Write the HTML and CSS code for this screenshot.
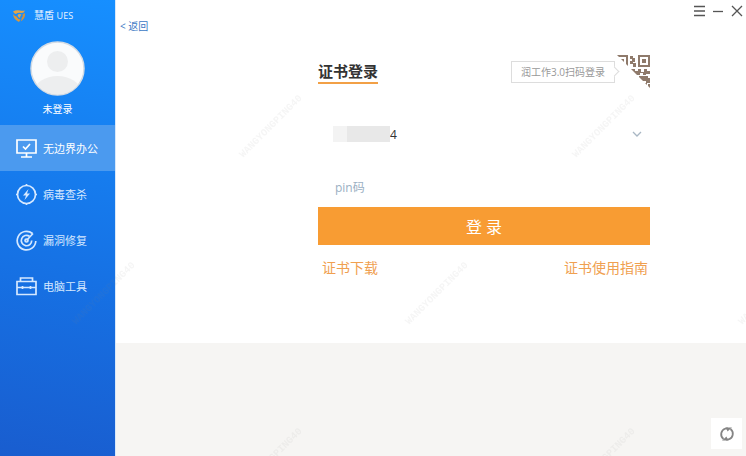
FILE: index.html
```html
<!DOCTYPE html>
<html lang="zh-CN">
<head>
    <meta charset="UTF-8">
    <meta name="viewport" content="width=device-width, initial-scale=1.0">
    <title>慧盾 UES</title>
    <link rel="stylesheet" href="styles.css">
</head>
<body>
    <div class="app">
        <aside class="sidebar">
            <div class="brand">
                <svg class="brand-logo" viewBox="0 0 14 14">
                    <path d="M1 2.500Q4 0.500 8 1.500Q11 2 13 1.500Q12 4 9.500 4Q6 3 4 5Q2 4.500 1 2.500Z" fill="#e3a548"/>
                    <path d="M1 5Q2.500 7 4.500 7.500Q6 10.500 8.500 10.500L7 13Q1.500 10.500 1 5Z" fill="#d9983c"/>
                    <path d="M13 4Q13.500 10 8.500 12.500Q10 10 9.500 9Q11.500 7 10.500 5.500Z" fill="#cf9240"/>
                    <path d="M5.500 6Q7 4.500 9.500 5.500Q8 7 8 9Q6 8.500 5.500 6Z" fill="#e3a548"/>
                </svg>
                <span class="brand-name">慧盾 <small>UES</small></span>
            </div>

            <div class="user">
                <svg class="avatar" viewBox="0 0 55 55">
                    <defs>
                        <clipPath id="avatarClip"><circle cx="27.500" cy="27.500" r="26"/></clipPath>
                    </defs>
                    <circle cx="27.500" cy="27.500" r="26.500" fill="#fafbfc" stroke="#d3dbe4" stroke-width="1.500"/>
                    <circle cx="27.500" cy="20.500" r="10.500" fill="#edeeef"/>
                    <ellipse cx="27.500" cy="50" rx="23" ry="15" fill="#edeeef" clip-path="url(#avatarClip)"/>
                </svg>
                <span class="user-name">未登录</span>
            </div>

            <nav class="menu">
                <a href="#" class="menu-item active">
                    <svg class="menu-icon" viewBox="0 0 21 21">
                        <path d="M1 2H20V15H1Z M10.500 15V18.500 M5 19H16"/>
                        <path d="M7 8.500L9.500 11L14 6"/>
                    </svg>
                    <span>无边界办公</span>
                </a>
                <a href="#" class="menu-item">
                    <svg class="menu-icon" viewBox="0 0 21 21">
                        <circle cx="10.500" cy="10.500" r="9"/>
                        <path d="M10.500 0V2 M10.500 19V21 M0 10.500H2 M19 10.500H21"/>
                        <path class="solid" d="M12.500 5L7 11.500H10L8.500 16L14 9.500H11Z"/>
                    </svg>
                    <span>病毒查杀</span>
                </a>
                <a href="#" class="menu-item">
                    <svg class="menu-icon" viewBox="0 0 21 21">
                        <path d="M16.500 3.500A9.300 9.300 0 1 0 19.800 11"/>
                        <path d="M13.500 6.300A5.200 5.200 0 1 0 15.700 10.500"/>
                        <path d="M10.500 10.500L17 3.500"/>
                        <circle cx="10.500" cy="10.500" r="1.500"/>
                    </svg>
                    <span>漏洞修复</span>
                </a>
                <a href="#" class="menu-item">
                    <svg class="menu-icon" viewBox="0 0 21 21">
                        <path d="M1 5.500H20V18.500H1Z M1 11.500H20"/>
                        <path d="M4.500 5.500V2H16.500V5.500 M6.500 10V13 M14.500 10V13"/>
                    </svg>
                    <span>电脑工具</span>
                </a>
            </nav>
        </aside>

        <main class="main">
            <section class="panel">
                <header class="titlebar">
                    <a href="#" class="back">&lt; 返回</a>
                    <div class="window-buttons">
                        <button type="button" aria-label="菜单">
                            <svg viewBox="0 0 12 12"><path d="M1 1.500H12 M1 6H12 M1 10.500H12"/></svg>
                        </button>
                        <button type="button" aria-label="最小化">
                            <svg viewBox="0 0 12 12"><path d="M1 6.500H11"/></svg>
                        </button>
                        <button type="button" aria-label="关闭">
                            <svg viewBox="0 0 12 12"><path d="M1 1L11 11 M11 1L1 11"/></svg>
                        </button>
                    </div>
                </header>

                <form class="login">
                    <div class="login-head">
                        <h1>证书登录</h1>
                        <div class="scan">
                            <a href="#" class="scan-tip">润工作3.0扫码登录</a>
                            <svg class="qr" viewBox="0 0 33 33">
                                <defs>
                                    <clipPath id="qrClip"><path d="M0 0H33V33Z"/></clipPath>
                                </defs>
                                <g clip-path="url(#qrClip)" fill="#8f7a6b">
                                    <path fill-rule="evenodd" d="M0 0H11V12H0Z M2 2H9V10H2Z"/>
                                    <path d="M4 4H7V8H4Z"/>
                                    <path fill-rule="evenodd" d="M21 0H33V12H21Z M23 2H31V10H23Z"/>
                                    <path d="M25 4H29V8H25Z"/>
                                    <path d="M13 1H16V3H18V7H16V9H13V6H15V4H13Z M16 8H19V12H16Z"/>
                                    <path d="M14 14H18V16H21V14H24V17H27V14H30V16H33V19H29V20H26V18H23V20H18V18H14Z"/>
                                    <path d="M22 21H31V23H33V28H29V26H26V28H22Z M27 28H30V33H27Z M31 29H33V33H31Z"/>
                                </g>
                            </svg>
                        </div>
                    </div>

                    <div class="field account">
                        <span class="mask"></span>
                        <select aria-label="证书账号">
                            <option>4</option>
                        </select>
                        <svg class="arrow" viewBox="0 0 10 6"><path d="M1 1L5 5L9 1"/></svg>
                    </div>
                    <div class="field">
                        <input type="password" placeholder="pin码" aria-label="pin码">
                    </div>

                    <button type="button" class="submit">登 录</button>

                    <div class="links">
                        <a href="#">证书下载</a>
                        <a href="#">证书使用指南</a>
                    </div>
                </form>
            </section>

            <footer class="bottom">
                <button type="button" class="refresh" aria-label="刷新">
                    <svg viewBox="0 0 16 16">
                        <path d="M4.500 13A6 6 0 0 1 6.500 2.500H9 M11.500 3A6 6 0 0 1 9.500 13.500H7"/>
                        <path class="solid" d="M7 1.500H13L8.500 5.500Z M9 14.500H3L7.500 10.500Z"/>
                    </svg>
                </button>
            </footer>
        </main>

        <!-- watermark over the whole window -->
        <svg class="watermark" aria-hidden="true">
            <defs>
                <pattern id="mark" width="333" height="333" patternUnits="userSpaceOnUse">
                    <text transform="translate(76 325) rotate(-45)">WANGYONGPING40</text>
                    <text transform="translate(243 158) rotate(-45)">WANGYONGPING40</text>
                </pattern>
            </defs>
            <rect width="100%" height="100%" fill="url(#mark)"/>
        </svg>
    </div>
</body>
</html>
```
FILE: styles.css
```css
* {
    box-sizing: border-box;
}

body {
    margin: 0;
    font-family: "Open Sans", "Noto Sans CJK SC", sans-serif;
    font-size: 10px;
    line-height: 16px;
    color: #333;
}

a {
    text-decoration: none;
}

button {
    border: none;
    padding: 0;
    background: none;
    font-family: inherit;
    cursor: pointer;
}

.app {
    position: relative;
    display: flex;
    min-height: 100vh;
    overflow: hidden;
}

/* sidebar */
.sidebar {
    flex: none;
    width: 115px;
    background: linear-gradient(190deg, #168fff, #1671e4 60%, #195dcf);
    color: #eaf4ff;
}

.brand {
    display: flex;
    align-items: center;
    gap: 8px;
    padding: 7px 12px 0;
}

.brand-logo {
    width: 14px;
    height: 14px;
}

.brand small {
    font-size: 9px;
}

.user {
    display: flex;
    flex-direction: column;
    align-items: center;
    gap: 5px;
    padding: 17px 0 8px;
}

.avatar {
    width: 55px;
    height: 55px;
}

.user-name {
    color: #fff;
}

.menu-item {
    display: flex;
    align-items: center;
    gap: 6px;
    height: 46px;
    padding-left: 16px;
    font-size: 11px;
    color: #d5e8ff;
}

.menu-item span {
    padding-top: 2px;
}

.menu-item.active {
    background: #4b9aef;
    color: #fff;
}

.menu-icon {
    width: 21px;
    height: 21px;
    fill: none;
    stroke: currentColor;
    stroke-width: 1.7;
}

.menu-icon .solid {
    fill: currentColor;
    stroke: none;
}

/* right side */
.main {
    flex: 1;
    display: flex;
    flex-direction: column;
    border-left: 1px solid #d8e8fa;
}

.panel {
    padding-bottom: 65px;
    background: #fff;
}

.titlebar {
    display: flex;
    justify-content: space-between;
    align-items: flex-start;
    padding: 4px 3px 0 4px;
}

.back {
    padding-top: 14px;
    color: #3b78c4;
}

.window-buttons {
    display: flex;
    gap: 7px;
}

.window-buttons button {
    width: 12px;
    height: 14px;
}

.window-buttons svg {
    display: block;
    width: 12px;
    height: 12px;
    fill: none;
    stroke: #555;
    stroke-width: 1.3;
}

.login {
    margin: 21px 96px 0 202px;
}

.login-head {
    display: flex;
    justify-content: space-between;
    align-items: center;
    height: 33px;
}

h1 {
    margin: 0;
    padding: 2px 0 1px;
    border-bottom: 2px solid #f2a046;
    font-size: 15px;
    line-height: 20px;
}

.scan {
    display: flex;
    align-items: center;
    gap: 2px;
}

.scan-tip {
    position: relative;
    padding: 2px 9px;
    border: 1px solid #ddd;
    color: #999;
}

.scan-tip::after {
    content: "";
    position: absolute;
    top: 6px;
    right: -4px;
    width: 6px;
    height: 6px;
    border: solid #ddd;
    border-width: 1px 1px 0 0;
    background: #fff;
    transform: rotate(45deg);
}

.qr {
    width: 33px;
    height: 33px;
}

.field {
    display: flex;
    align-items: center;
    height: 40px;
}

.field select,
.field input {
    width: 100%;
    height: 32px;
    border: none;
    outline: none;
    background: transparent;
    font-family: inherit;
    font-size: 12px;
    color: #333;
}

.field input {
    padding: 0 17px;
}

.field input::placeholder {
    color: #9aafc3;
}

.account {
    position: relative;
    margin: 26px 0 13px;
}

.account select {
    appearance: none;
    padding: 0 24px 0 72px;
}

.mask {
    position: absolute;
    left: 15px;
    width: 57px;
    height: 16px;
    background: linear-gradient(90deg, #f3f3f3 14px, #e8e8e8 14px);
}

.arrow {
    position: absolute;
    right: 8px;
    width: 10px;
    height: 6px;
    fill: none;
    stroke: #a9b7c4;
    stroke-width: 1.3;
    pointer-events: none;
}

.submit {
    display: block;
    width: 100%;
    height: 38px;
    background: #f89c33;
    font-size: 16px;
    color: #fff;
}

.links {
    display: flex;
    justify-content: space-between;
    padding: 13px 2px 0 4px;
    font-size: 14px;
    line-height: 20px;
}

.links a {
    color: #f0a050;
}

.bottom {
    flex: 1;
    display: flex;
    justify-content: flex-end;
    align-items: flex-end;
    padding: 7px 4px;
    background: #f6f5f3;
}

.refresh {
    display: flex;
    justify-content: center;
    align-items: center;
    width: 31px;
    height: 31px;
    background: #fff;
}

.refresh svg {
    width: 16px;
    height: 16px;
    fill: none;
    stroke: #858585;
    stroke-width: 1.8;
}

.refresh .solid {
    fill: #858585;
    stroke: none;
}

.watermark {
    position: absolute;
    inset: 0;
    width: 100%;
    height: 100%;
    pointer-events: none;
    font-family: "Liberation Mono", monospace;
    font-size: 10px;
    font-weight: bold;
    fill: rgba(130, 130, 130, 0.08);
}
```
